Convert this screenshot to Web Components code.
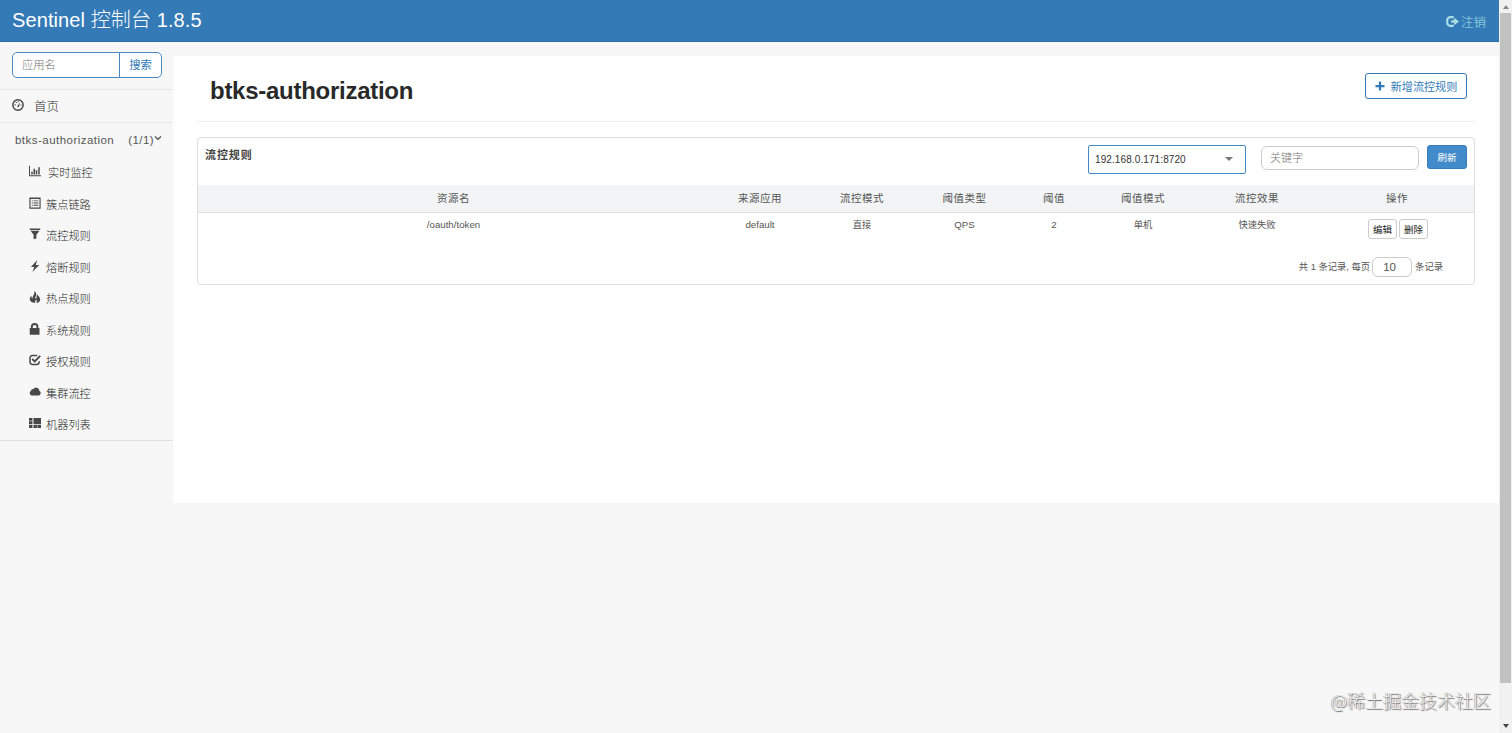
<!DOCTYPE html>
<html lang="zh-CN">
<head>
<meta charset="utf-8">
<title>Sentinel 控制台</title>
<style>
html,body{margin:0;height:733px;overflow:hidden;background:#f7f7f7}
body{font-family:"Liberation Sans","Noto Sans CJK SC",sans-serif;font-size:12px;color:#555}
</style>
</head>
<body>
<sentinel-app></sentinel-app>
<script>
const define = (name, html, setup) => customElements.define(name, class extends HTMLElement {
  connectedCallback() {
    if (this.shadowRoot) return;
    const t = document.createElement('template');
    t.innerHTML = html;
    this.attachShadow({mode: 'open'}).append(t.content.cloneNode(true));
    if (setup) setup(this, this.shadowRoot);
  }
});

const icons = {
  dash: '<circle cx="8" cy="8" r="6.9" fill="none" stroke="currentColor" stroke-width="1.9"/><path d="M7 9.8 10.8 4.6 9.2 10.4 8 11z"/><path d="M3.3 7h1.5v1.5H3.3zM5 4h1.5v1.4H5zM7.5 3H9v1.4H7.5zM11.3 7.3h1.5v1.4h-1.5z"/>',
  chart: '<path d="M0 1h1.3v12.7H16V15H0zM3 9h2v3.5H3zM6 5h2v7.500H6zM9 7h2v5.500H9zM12.300 3h2v9.500h-2z"/>',
  list: '<path fill-rule="evenodd" d="M.5.500h15v15H.5zM2 2.500v11.500h12V2.500z"/><path d="M3.700 4.500h1.300v1.300H3.700zM6 4.500h6.500v1.300H6zM3.700 7.300h1.300v1.300H3.700zM6 7.300h6.500v1.300H6zM3.700 10.200h1.300v1.300H3.700zM6 10.200h6.500v1.300H6z"/>',
  filter: '<path d="M1 .5h14v2H1zM2 3.500h12L9.900 9v5L6.100 15V9z"/>',
  flash: '<path d="M11 0 2.600 9.300H7L4.600 16 13.600 6.500H9z"/>',
  fire: '<path d="M7 0c3.200 2.300 3.400 5 1.700 7.500-.9 1.500-.2 2.700.6 2.700 1.400-.5.200-3 1.700-6 1 2.300 4 4 4 7 0 2.300-2.300 4.600-5.200 4.800 1-1.600 1-3-.2-4.200-1.300 1-1.700 2.500-1.300 4.200C4 16 1 14 1 10.800c0-2 1.200-3.400 2.300-4.800 0 2 .2 3.500 1.200 4.400C4.200 7 8 5 7 0z"/>',
  lock: '<path fill-rule="evenodd" d="M1 6.700h1.500V5a5 5 0 0 1 10 0v1.700H14V15.500H1zM5 6.700h5V5a2.500 2.500 0 0 0-5 0z"/>',
  check: '<path d="M11 2H4.500A3.200 3.200 0 0 0 1.300 5.200v5.600A3.200 3.200 0 0 0 4.500 14h5.800a3.200 3.200 0 0 0 3.200-3.200V9.500" fill="none" stroke="currentColor" stroke-width="2"/><path d="m4.300 6.700 3.300 3.300L15 2.500" fill="none" stroke="currentColor" stroke-width="2.500"/>',
  cloud: '<path d="M3.500 12.500a3.400 3.400 0 0 1-.7-6.300 2.300 2.300 0 0 1 2.900-1.900 4.300 4.300 0 0 1 8 2.100 3.200 3.200 0 0 1-.7 6.100z"/>',
  grid: '<path d="M0 1.300h4.600v3.800H0zM0 5.700h4.600v3.800H0zM0 10.700h4.600v4H0zM6 1.300h10v8.200H6zM6 10.700h4.600v4H6zM11.200 10.700H16v4h-4.800z"/>',
  down: '<path d="m2 5 6 5.500L14 5" fill="none" stroke="currentColor" stroke-width="2.600"/>',
  plus: '<path d="M6.200 .8h3.600v5.400h5.400v3.600H9.800v5.400H6.200V9.800H.8V6.200h5.400z"/>',
  logout: '<path d="M9.500 2.600H5.500A3.800 3.800 0 0 0 1.500 6.400v3.200a3.800 3.800 0 0 0 4 3.800h4" fill="none" stroke="currentColor" stroke-width="2.600"/><path d="M6.500 6.500H10V3.300L16 8l-6 4.700V9.600H6.500z"/>'
};
define('s-icon', `<style>:host{display:inline-block;width:12px;height:12px;flex:none}svg{display:block;width:100%;height:100%;fill:currentColor}</style><svg viewBox="0 0 16 16"></svg>`,
  (h, r) => r.querySelector('svg').innerHTML = icons[h.getAttribute('name')]);

define('s-header', `<style>
:host{display:flex;box-sizing:border-box;height:42px;background:#337ab7;border-bottom:1px solid #2e6da4;color:#fff;justify-content:space-between;padding:0 13px 0 12px}
h1{margin:0;font-size:20px;line-height:40px;font-weight:300;white-space:nowrap;letter-spacing:.1px}
a{display:flex;align-items:center;color:#a9e0e4;font-weight:300;font-size:12.500px;gap:2px;padding-top:2px}
s-icon{width:13px;height:13px}
</style><h1>Sentinel 控制台 1.8.5</h1><a><s-icon name="logout"></s-icon><span>注销</span></a>`);

define('s-search', `<style>
:host{display:flex;box-sizing:border-box;width:150px;height:26px;border:1px solid #4a8ac4;border-radius:5px;background:#fff;line-height:25px;font-weight:300}
span{flex:1;padding-left:9px;color:#777;font-size:11.300px}
b{width:41px;border-left:1px solid #4a8ac4;text-align:center;color:#337ab7;font-weight:400;font-size:11.300px}
</style><span>应用名</span><b>搜索</b>`);

define('s-nav-item', `<style>
:host{display:flex;align-items:center;height:31.500px;padding-left:29px;font-size:11.200px;color:#222;font-weight:300}
s-icon{color:#484848;margin-right:var(--gap,5px);margin-bottom:1px}
span{white-space:nowrap;padding-top:.6px}
</style><s-icon></s-icon><span><slot></slot></span>`, (h, r) => {
  const i = document.createElement('s-icon');
  i.setAttribute('name', h.getAttribute('icon'));
  r.querySelector('s-icon').replaceWith(i);
});

define('s-sidebar', `<style>
:host{display:block;width:173px;flex:none;color:#555}
.search{height:48px;box-sizing:border-box;padding:10px 0 0 12px;border-bottom:1px solid #e7e7e7}
.home{display:flex;box-sizing:border-box;align-items:center;height:33px;border-bottom:1px solid #e7e7e7;padding-left:12px;font-size:12.500px;gap:10px;font-weight:300;color:#333}
.home s-icon{color:#444;margin-bottom:2px}
.home span{margin-bottom:2px}
.app{display:flex;align-items:center;height:33px;padding:0 11px 0 15px;font-size:11.500px;letter-spacing:.47px;white-space:nowrap}
.app .n{margin-left:auto;letter-spacing:.4px}
.app s-icon{width:8px;height:8px;margin-bottom:4px}
nav{border-bottom:1px solid #e2e2e2}
</style>
<div class="search"><s-search></s-search></div>
<div class="home"><s-icon name="dash"></s-icon><span>首页</span></div>
<div class="app"><span>btks-authorization</span><span class="n">(1/1)</span><s-icon name="down"></s-icon></div>
<nav>
<s-nav-item icon="chart" style="--gap:7px">实时监控</s-nav-item>
<s-nav-item icon="list">簇点链路</s-nav-item>
<s-nav-item icon="filter">流控规则</s-nav-item>
<s-nav-item icon="flash">熔断规则</s-nav-item>
<s-nav-item icon="fire">热点规则</s-nav-item>
<s-nav-item icon="lock">系统规则</s-nav-item>
<s-nav-item icon="check">授权规则</s-nav-item>
<s-nav-item icon="cloud">集群流控</s-nav-item>
<s-nav-item icon="grid">机器列表</s-nav-item>
</nav>`);

define('s-button', `<style>
:host{display:flex;box-sizing:border-box;align-items:center;justify-content:center;white-space:nowrap;border:1px solid #ccc;border-radius:3px;background:#fff;color:#222;font-size:9.500px;width:29px;height:20px}
:host([kind=outline]){width:102px;height:26px;border-color:#337ab7;color:#337ab7;font-size:11.100px}
:host([kind=primary]){width:40px;height:24px;border-color:#357ebd;background:#428bca;color:#fff;font-size:9.500px}
::slotted(s-icon){width:10px;height:10px;margin-right:6px}
</style><slot></slot>`);

define('rule-table', `<style>
:host{display:block}
.r{display:grid;grid-template-columns:511px 102px 102px 103px 76px 102px 126px 1fr;text-align:center;white-space:nowrap}
.h{height:27px;line-height:27px;background:#f2f4f5;border-bottom:1px solid #dfe2e4;font-size:10.500px;letter-spacing:.55px}
.b{height:42px;font-size:9.300px;line-height:25px;color:#555}
.l{font-size:9.700px;line-height:24px}
.ops{display:flex;gap:2px;justify-content:center;padding:6px 0 0 2px}
</style>
<div class="r h"><span>资源名</span><span>来源应用</span><span>流控模式</span><span>阈值类型</span><span>阈值</span><span>阈值模式</span><span>流控效果</span><span>操作</span></div>
<div class="r b"><span class="l">/oauth/token</span><span class="l">default</span><span>直接</span><span class="l">QPS</span><span class="l">2</span><span>单机</span><span>快速失败</span><div class="ops"><s-button>编辑</s-button><s-button>删除</s-button></div></div>`);

define('rule-card', `<style>
:host{display:block;box-sizing:border-box;height:148px;border:1px solid #ddd;border-radius:4px;background:#fff}
.top{display:flex;height:47px;box-sizing:border-box;padding:7px 7px 0}
.top strong{flex:1;font-size:11px;letter-spacing:.9px;line-height:20px;color:#444}
.sel{display:flex;align-items:center;justify-content:space-between;box-sizing:border-box;width:158px;height:29px;border:1px solid #428bca;border-radius:2px;padding:0 12px 1px 6px;font-size:10px;color:#333;letter-spacing:.1px}
.sel i{border:4px solid transparent;border-top:4px solid #777;border-bottom:0}
.key{box-sizing:border-box;width:158px;height:24px;margin:1px 8px 0 15px;border:1px solid #ccc;border-radius:6px;padding-left:8px;font-size:11px;line-height:22px;color:#777;font-weight:300}
.foot{display:flex;align-items:center;justify-content:flex-end;height:22px;padding:1px 31px 0 0;font-size:9.300px;white-space:nowrap}
.foot span{margin-bottom:2px}
.num{box-sizing:border-box;width:40px;height:20px;border:1px solid #ccc;border-radius:6px;margin:0 3px 0 2px;text-align:center;padding-right:5px;font-size:11.500px;line-height:19px}
</style>
<div class="top"><strong>流控规则</strong><div class="sel"><span>192.168.0.171:8720</span><i></i></div><div class="key">关键字</div><s-button kind="primary">刷新</s-button></div>
<rule-table></rule-table>
<div class="foot"><span>共 1 条记录, 每页</span><div class="num">10</div><span>条记录</span></div>`);

define('s-main', `<style>
:host{display:block;flex:1;box-sizing:border-box;height:447px;margin-top:14px;background:#fff;padding:0 24px}
.title{display:flex;justify-content:space-between;height:66px;box-sizing:border-box;border-bottom:1px solid #eee;padding:17px 8px 0 13px;margin-bottom:15px}
h2{margin:0;color:#292929;font-size:24px;line-height:36px;letter-spacing:-.27px}
</style>
<div class="title"><h2>btks-authorization</h2><s-button kind="outline"><s-icon name="plus"></s-icon>新增流控规则</s-button></div>
<rule-card></rule-card>`);

define('s-scrollbar', `<style>
:host{display:flex;flex-direction:column;align-items:center;box-sizing:border-box;width:13px;height:733px;background:#f1f1f1}
i{border:3px solid transparent}
.up{border-bottom:4px solid #888;border-top:0;margin:5px 0 4px}
.thumb{width:11px;height:670px;background:#c1c1c1}
.dn{border-top:4px solid #444;border-bottom:0;margin-top:41px}
</style><i class="up"></i><div class="thumb"></div><i class="dn"></i>`);

define('s-watermark', `<style>
:host{position:absolute;right:21px;bottom:20px;font-family:"Noto Sans CJK SC",sans-serif;font-size:18px;line-height:26px;color:#f2f2f2;white-space:nowrap;font-weight:300;text-shadow:1px 1px 1px #666,-.5px -.5px 0 #999}
</style><slot></slot>`);

define('sentinel-app', `<style>
:host{display:flex;position:relative;width:1512px;height:733px;overflow:hidden}
.page{flex:1;min-width:0}
.body{display:flex}
</style>
<div class="page"><s-header></s-header><div class="body"><s-sidebar></s-sidebar><s-main></s-main></div></div>
<s-scrollbar></s-scrollbar>
<s-watermark>@稀土掘金技术社区</s-watermark>`);
</script>
</body>
</html>
